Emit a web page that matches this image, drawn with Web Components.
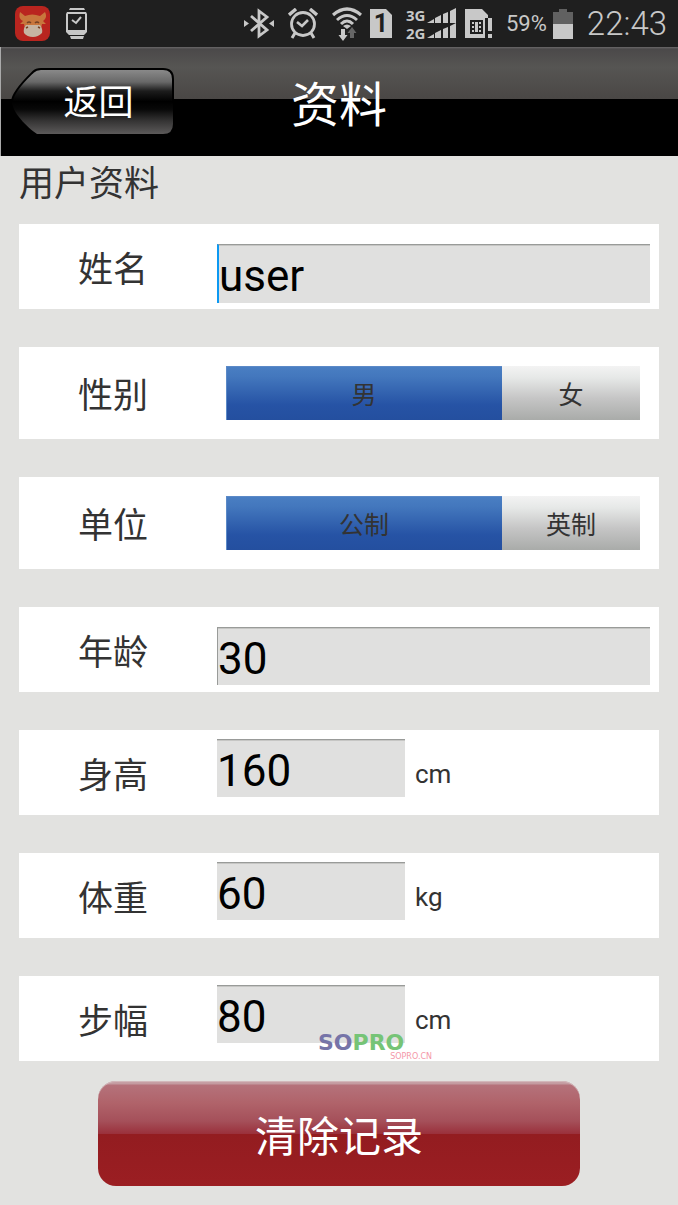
<!DOCTYPE html>
<html lang="zh-CN">
<head>
<meta charset="utf-8">
<meta name="viewport" content="width=device-width, initial-scale=1">
<title>资料</title>
<style>
  body {
    margin: 0;
    background: #e2e2e0;
    color: #333;
    font-family: Roboto, "Noto Sans CJK SC", sans-serif;
  }
</style>
</head>
<body>
<profile-app></profile-app>

<script>
const templateStatusBar = document.createElement("template");

templateStatusBar.innerHTML = `
<style>
  :host{
    display:flex;
    align-items:center;
    justify-content:space-between;
    height:47px;
    padding:0 11px 0 15px;
    background:#1f1f1f;
    color:#c8c8c8;
  }
  .side{
    display:flex;
    align-items:center;
    gap:14px;
  }
  .apps{
    gap:16px;
  }
  .pair{
    display:flex;
    align-items:center;
    gap:8px;
  }
  .battery{
    gap:6px;
  }
  svg{
    display:block;
  }
  .sim{
    display:grid;
    place-items:center;
    width:22px;
    height:29px;
    background:#c8c8c8;
    clip-path:polygon(0 0,16px 0,22px 6px,22px 29px,0 29px);
    color:#1f1f1f;
    font:bold 25px/29px Roboto,sans-serif;
  }
  .signal{
    display:flex;
  }
  .nets{
    width:21px;
    font:bold 15px/18px "Noto Sans",sans-serif;
  }
  .nets div{
    height:18px;
  }
  .percent{
    font-size:22px;
  }
  .time{
    font-size:33px;
    font-weight:300;
  }
</style>
<div class="side apps">
  <svg width="35" height="35" viewBox="0 0 35 35">
    <rect width="35" height="35" rx="8" fill="#b9251f"/>
    <path d="M5 6L10 10Q17 7 25 10L30 6C32 10 31 13 28 15L31 18L27 18L26 23H10L9 18L5 18L8 15C4 13 4 10 5 6Z" fill="#c8773d"/>
    <path d="M11 19H25Q28 23 27 27Q23 31 18 31Q12 31 9 27Q8 22 11 19Z" fill="#c6b5a2"/>
    <path d="M12 17q2-2 4 0M20 17q2-2 4 0M11 22l2-1M25 22l-2-1" fill="none" stroke="#744225" stroke-width="1.4"/>
  </svg>
  <svg width="23" height="33" viewBox="0 0 23 33">
    <path d="M4 1H18L19 3H3ZM1 5H20L21 7V25L18 28H3L0 25V7Z" fill="#c8c8c8"/>
    <rect x="2" y="7" width="17" height="16" fill="#1f1f1f"/>
    <path d="M4 29H18L17 32H5Z" fill="#c8c8c8"/>
    <path d="M6 13L10 16L15 10" fill="none" stroke="#c8c8c8" stroke-width="2"/>
  </svg>
</div>
<div class="side">
  <svg width="30" height="31" viewBox="0 0 30 31" fill="none" stroke="#c8c8c8" stroke-width="2.8">
    <path d="M7 8L23 22L15 28V3L23 9L7 23"/>
    <path d="M0 12L5 15.500L0 19ZM30 12L25 15.500L30 19Z" fill="#c8c8c8" stroke="none"/>
  </svg>
  <svg width="30" height="31" viewBox="0 0 30 31" fill="none" stroke="#c8c8c8">
    <circle cx="15" cy="16" r="11.500" stroke-width="2.800"/>
    <path d="M9 14L14 18L20 12" stroke-width="2.600"/>
    <path d="M1 7L8 1M29 7L22 1" stroke-width="3.400"/>
    <path d="M7 25L4 30M23 25L26 30" stroke-width="3"/>
  </svg>
  <div class="pair">
    <svg width="30" height="34" viewBox="0 0 30 34" fill="none" stroke="#c8c8c8">
      <path d="M1 8Q15-4 29 8" stroke-width="3.200"/>
      <path d="M5 13Q15 4 25 13" stroke-width="3"/>
      <path d="M9 17Q15 11 21 17" stroke-width="3"/>
      <path d="M11 19Q15 16 19 19L15 22Z" fill="#c8c8c8" stroke="none"/>
      <path d="M9 22H13V28H15.500L11 34L6.500 28H9Z" fill="#c8c8c8" stroke="none"/>
      <path d="M18 31H22V26H24.500L20 20L15.500 26H18Z" fill="#666" stroke="none"/>
    </svg>
    <div class="sim">1</div>
  </div>
  <div class="pair">
    <div class="signal">
      <div class="nets"><div>3G</div><div>2G</div></div>
      <svg width="30" height="36" viewBox="0 0 30 36" fill="#c8c8c8">
        <path d="M0 17L7 13V17ZM8 12L14 9V17H8ZM16 8L21 6V17H16ZM23 5L29 2V17H23Z"/>
        <path d="M0 32L7 28V32ZM8 27L14 24V32H8ZM16 23L21 21V32H16ZM23 20L29 17V32H23Z"/>
      </svg>
    </div>
    <svg width="27" height="30" viewBox="0 0 27 30">
      <path d="M0 0H17L23 6V9H20V29H0Z" fill="#c8c8c8"/>
      <path d="M5 11H18V25H5Z" fill="#1f1f1f"/>
      <path d="M7 13h2v2h-2zM7 17h2v2h-2zM7 21h2v2h-2zM10 13h3v10h-3zM14 13h2v2h-2zM14 17h2v2h-2zM14 21h2v2h-2z" fill="#c8c8c8"/>
      <path d="M23 9H27V22H23ZM23 25H27V29H23Z" fill="#c8c8c8"/>
    </svg>
  </div>
  <div class="pair battery">
    <span class="percent">59%</span>
    <svg width="20" height="30" viewBox="0 0 20 30">
      <path d="M0 3H6V0H14V3H20V15H0Z" fill="#616161"/>
      <path d="M0 15H20V30H0Z" fill="#c8c8c8"/>
    </svg>
  </div>
  <span class="time"><slot></slot></span>
</div>
`;

class StatusBar extends HTMLElement {
  constructor() {
    super();
    this.attachShadow({ mode: "open" });
    this.shadowRoot.appendChild(templateStatusBar.content.cloneNode(true));
  }
}

const templateTitleBar = document.createElement("template");

templateTitleBar.innerHTML = `
<style>
  :host{
    display:grid;
    grid-template-columns:1fr auto 1fr;
    align-items:center;
    box-sizing:border-box;
    height:109px;
    padding:0 11px 0 10px;
    border-left:1px solid #aaa;
    background:linear-gradient(#6b696a 0,#4b494a 2px,#565553 20px,#4a4745 52px,#000 52px);
    color:#fff;
  }
  button{
    position:relative;
    justify-self:start;
    width:163px;
    height:68px;
    padding:4px 0 0 12px;
    border:0;
    background:none;
    color:inherit;
    font:inherit;
    font-size:35px;
    line-height:64px;
  }
  svg{
    position:absolute;
    inset:0;
  }
  span{
    position:relative;
  }
  h1{
    margin:0;
    padding-top:8px;
    font-size:48px;
    font-weight:400;
    line-height:60px;
  }
</style>
<button type="button">
  <svg width="163" height="68" viewBox="0 0 163 68">
    <defs>
      <linearGradient id="gloss" x2="0" y2="1">
        <stop offset="0" stop-color="#8c8c8c"/>
        <stop offset=".2" stop-color="#686868"/>
        <stop offset=".34" stop-color="#1c1c1c"/>
        <stop offset=".5" stop-color="#000"/>
        <stop offset=".62" stop-color="#080808"/>
        <stop offset=".8" stop-color="#353434"/>
        <stop offset="1" stop-color="#5c5a5a"/>
      </linearGradient>
    </defs>
    <path d="M1 34C2 23 16 10 22 4Q25 1 30 1H152Q162 1 162 11V56Q162 66 152 66H26C20 62 2 47 1 34Z" fill="url(#gloss)"/>
    <path d="M1 33C2 23 16 10 22 4Q25 1 30 1H152Q162 1 162 11V35" fill="none" stroke="#000" stroke-width="2"/>
  </svg>
  <span>返回</span>
</button>
<h1><slot></slot></h1>
`;

class TitleBar extends HTMLElement {
  constructor() {
    super();
    this.attachShadow({ mode: "open" });
    this.shadowRoot.appendChild(templateTitleBar.content.cloneNode(true));
  }
}

// shared by the rows that have a caption on the left and a control on the right
const rowStyle = `
  :host{
    display:grid;
    grid-template-columns:198px minmax(0,1fr);
    align-items:center;
    box-sizing:border-box;
    background:#fff;
  }
  .caption{
    padding:8px 0 0 59px;
    font-size:35px;
    line-height:48px;
  }
`;

const templateTextRow = document.createElement("template");

templateTextRow.innerHTML = `
<style>
  ${rowStyle}
  :host{
    height:85px;
    padding-right:9px;
  }
  .control{
    display:flex;
    align-items:center;
    align-self:stretch;
    gap:10px;
  }
  input{
    box-sizing:border-box;
    align-self:flex-start;
    flex:1;
    min-width:0;
    height:58px;
    margin:20px 0 0;
    padding:4px 0 0;
    border:0;
    border-top:1px solid #999b99;
    border-left:1px solid #999b99;
    border-radius:0;
    outline:0;
    background:#e0e0df;
    box-shadow:inset 0 1px #c6c6c4;
    color:#000;
    font:inherit;
    font-size:44px;
  }
  :host([unit]) input{
    flex:none;
    width:188px;
    margin-top:9px;
    border-left:0;
  }
  :host([active]) input{
    height:59px;
    border-left:2px solid #0d99f2;
  }
  .unit{
    padding-top:2px;
    font-size:26px;
    line-height:28px;
  }
</style>
<label class="caption" for="value"></label>
<div class="control">
  <input id="value" type="text">
  <span class="unit"></span>
</div>
`;

class TextRow extends HTMLElement {
  constructor() {
    super();
    this.attachShadow({ mode: "open" });
    this.shadowRoot.appendChild(templateTextRow.content.cloneNode(true));
  }

  connectedCallback() {
    this.shadowRoot.querySelector("label").textContent = this.getAttribute("label");
    this.shadowRoot.querySelector("input").value = this.getAttribute("value");
    const unit = this.shadowRoot.querySelector(".unit");
    if (this.hasAttribute("unit")) {
      unit.textContent = this.getAttribute("unit");
    } else {
      unit.remove();
    }
  }
}

const templateChoiceRow = document.createElement("template");

templateChoiceRow.innerHTML = `
<style>
  ${rowStyle}
  :host{
    height:92px;
    padding-right:19px;
  }
  .choices{
    display:grid;
    grid-template-columns:2fr 1fr;
    height:54px;
    margin-left:9px;
  }
  .choices label{
    position:relative;
    display:grid;
    place-items:center;
    background:linear-gradient(#f3f3f3,#e6e8e7 22%,#c5c5c5 60%,#a9aba9);
    font-size:25px;
  }
  .choices label:has(:checked){
    background:linear-gradient(#4a7fc3,#4377bd 20%,#2653a5 72%,#244f9f);
    box-shadow:inset 1px 1px #5b89c7;
  }
  input{
    position:absolute;
    inset:0;
    width:100%;
    height:100%;
    margin:0;
    opacity:0;
  }
</style>
<span class="caption" id="caption"></span>
<div class="choices" role="radiogroup" aria-labelledby="caption"></div>
`;

class ChoiceRow extends HTMLElement {
  constructor() {
    super();
    this.attachShadow({ mode: "open" });
    this.shadowRoot.appendChild(templateChoiceRow.content.cloneNode(true));
  }

  connectedCallback() {
    this.shadowRoot.querySelector(".caption").textContent = this.getAttribute("label");
    this.choices = this.shadowRoot.querySelector(".choices");
    this._renderChoices();
  }

  _renderChoices() {
    this.choices.innerHTML = "";
    this.getAttribute("options").split(",").forEach((text, index) => {
      const label = document.createElement("label");
      const input = document.createElement("input");
      input.type = "radio";
      input.name = "choice";
      input.value = text;
      input.checked = index === 0;
      label.append(input, text);
      this.choices.appendChild(label);
    });
  }
}

const templateSiteMark = document.createElement("template");

templateSiteMark.innerHTML = `
<style>
  :host{
    display:block;
    pointer-events:none;
  }
  .name{
    font:bold 22px/20px "DejaVu Sans",sans-serif;
    color:#76c476;
  }
  .name b{
    color:#7674a8;
  }
  .site{
    font:8px/8px "DejaVu Sans",sans-serif;
    color:#f497a8;
    text-align:right;
  }
</style>
<div class="name"><b>SO</b>PRO</div>
<div class="site">SOPRO.CN</div>
`;

class SiteMark extends HTMLElement {
  constructor() {
    super();
    this.attachShadow({ mode: "open" });
    this.shadowRoot.appendChild(templateSiteMark.content.cloneNode(true));
  }
}

const templateClearButton = document.createElement("template");

templateClearButton.innerHTML = `
<style>
  :host{
    display:block;
  }
  button{
    display:block;
    width:100%;
    height:105px;
    padding:0;
    border:0;
    border-radius:18px;
    background:linear-gradient(#c9a3a8 0,#c39aa0 3px,#b5727b 4px,#b0636a 22px,#a5505a 40px,#9a303b 53px,#931c20 53px,#9b1e22);
    box-shadow:inset 0 1px #d2b8bb;
    color:#fff;
    font:inherit;
    font-size:42px;
  }
</style>
<button type="button"><slot></slot></button>
`;

class ClearButton extends HTMLElement {
  constructor() {
    super();
    this.attachShadow({ mode: "open" });
    this.shadowRoot.appendChild(templateClearButton.content.cloneNode(true));
  }
}

const templateProfileApp = document.createElement("template");

templateProfileApp.innerHTML = `
<style>
  :host{
    display:block;
  }
  main{
    padding:0 19px 19px;
  }
  h2{
    margin:0;
    padding:4px 0 14px;
    font-size:35px;
    font-weight:400;
    line-height:50px;
  }
  .rows{
    display:grid;
    grid-template-columns:minmax(0,1fr);
    gap:38px;
  }
  .last{
    position:relative;
  }
  /* the mark lies over the lower edge of the last field */
  site-mark{
    position:absolute;
    left:299px;
    bottom:0;
    width:114px;
  }
  clear-button{
    margin:20px 79px 0;
  }
</style>
<status-bar>22:43</status-bar>
<title-bar>资料</title-bar>
<main>
  <h2>用户资料</h2>
  <div class="rows">
    <text-row label="姓名" value="user" active></text-row>
    <choice-row label="性别" options="男,女"></choice-row>
    <choice-row label="单位" options="公制,英制"></choice-row>
    <text-row label="年龄" value="30"></text-row>
    <text-row label="身高" value="160" unit="cm"></text-row>
    <text-row label="体重" value="60" unit="kg"></text-row>
    <div class="last">
      <text-row label="步幅" value="80" unit="cm"></text-row>
      <site-mark></site-mark>
    </div>
  </div>
  <clear-button>清除记录</clear-button>
</main>
`;

class ProfileApp extends HTMLElement {
  constructor() {
    super();
    this.attachShadow({ mode: "open" });
    this.shadowRoot.appendChild(templateProfileApp.content.cloneNode(true));
  }
}

window.customElements.define("status-bar", StatusBar);
window.customElements.define("title-bar", TitleBar);
window.customElements.define("text-row", TextRow);
window.customElements.define("choice-row", ChoiceRow);
window.customElements.define("site-mark", SiteMark);
window.customElements.define("clear-button", ClearButton);
window.customElements.define("profile-app", ProfileApp);
</script>
</body>
</html>
